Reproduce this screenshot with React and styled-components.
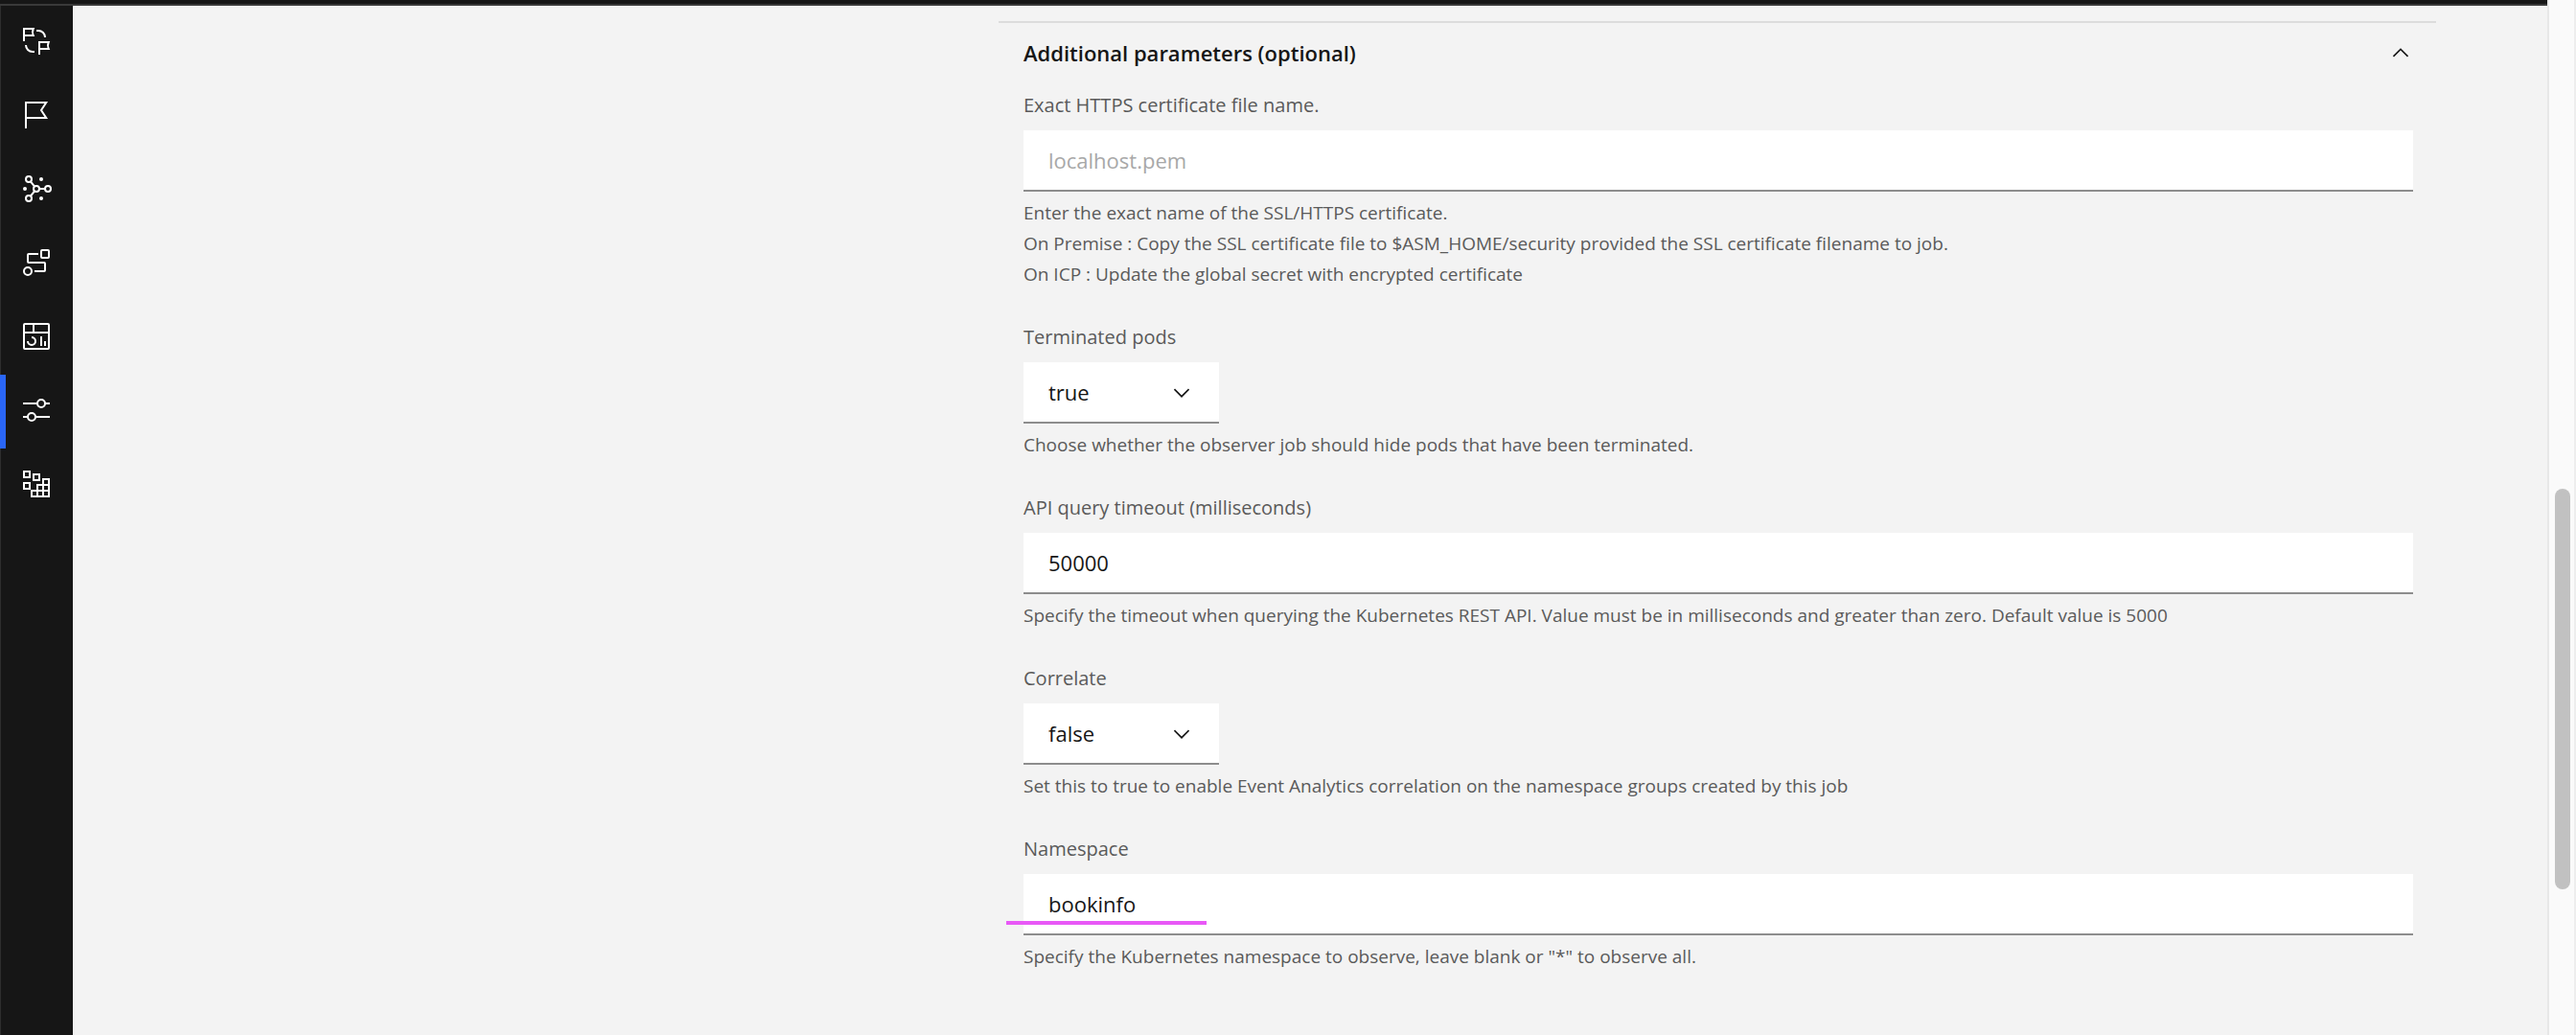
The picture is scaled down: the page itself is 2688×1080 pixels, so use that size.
import React, { useState } from "react";
import styled, { createGlobalStyle } from "styled-components";

const GlobalStyle = createGlobalStyle`
  *, *::before, *::after { box-sizing: border-box; }
  body {
    margin: 0;
    background: #f3f3f3;
    color: #161616;
    font-family: "Open Sans", "Noto Sans", sans-serif;
  }
  button, input, select { font: inherit; color: inherit; }
`;

const Shell = styled.div`
  display: flex;
  min-height: 100vh;
`;

const Page = styled.div`
  flex: 1;
  min-width: 0;
  display: flex;
  flex-direction: column;
`;

const TopBar = styled.header`
  height: 6px;
  background: #161616;
  border-bottom: 2px solid #393939;
`;

const Body = styled.div`
  flex: 1;
  display: flex;
`;

const SideNav = styled.nav`
  flex: none;
  width: 76px;
  background: #161616;
  box-shadow: inset 1px 0 #2e2e2e;
`;

const NavButton = styled.button`
  display: flex;
  justify-content: center;
  width: 100%;
  height: 77px;
  padding: 21px 0 24px;
  border: 0;
  background: transparent;
  box-shadow: ${({ $active }) => ($active ? "inset 6px 0 #2a66f6" : "none")};
  color: #ffffff;
  cursor: pointer;
`;

const NavIcon = styled.svg`
  width: 32px;
  height: 32px;
  fill: none;
  stroke: currentColor;
  stroke-width: 2;
`;

const Main = styled.main`
  flex: 1;
  display: grid;
  grid-template-columns: 966fr 1500fr 116fr;
  align-items: start;
  padding: 16px 0 64px;
`;

const Section = styled.section`
  grid-column: 2;
  min-width: 0;
  border-top: 2px solid #dcdcdc;
`;

const SectionHeading = styled.h2`
  margin: 0;
  font-size: 22px;
  font-weight: 600;
`;

const SectionToggle = styled.button`
  display: flex;
  align-items: center;
  justify-content: space-between;
  width: 100%;
  height: 62px;
  padding: 0 24px 0 26px;
  border: 0;
  background: transparent;
  text-align: left;
  cursor: pointer;
`;

const Chevron = styled.svg`
  width: 26px;
  height: 26px;
  fill: #161616;
`;

const Fields = styled.form`
  display: flex;
  flex-direction: column;
  gap: 38px;
  padding: 12px 24px 0 26px;
`;

const FieldGroup = styled.div`
  display: flex;
  flex-direction: column;
  align-items: flex-start;
`;

const Label = styled.label`
  margin-bottom: 14px;
  color: #5a5a5a;
  font-size: 20px;
  line-height: 24px;
`;

const Control = styled.div`
  position: relative;
  width: ${({ $compact }) => ($compact ? "204px" : "100%")};
`;

const TextInput = styled.input`
  display: block;
  width: 100%;
  height: 64px;
  padding: 0 26px;
  border: 0;
  border-bottom: 2px solid #8d8d8d;
  border-radius: 0;
  background: #ffffff;
  font-size: 22px;
  outline: none;

  &::placeholder { color: #a8a8a8; opacity: 1; }
`;

const Select = styled.select`
  display: block;
  width: 100%;
  height: 64px;
  padding: 0 64px 0 26px;
  border: 0;
  border-bottom: 2px solid #8d8d8d;
  border-radius: 0;
  background: #ffffff;
  font-size: 22px;
  appearance: none;
  outline: none;
`;

const SelectChevron = styled(Chevron)`
  position: absolute;
  top: 19px;
  right: 26px;
  pointer-events: none;
`;

const Underline = styled.span`
  position: absolute;
  left: -18px;
  bottom: 11px;
  width: 209px;
  height: 4px;
  background: #e858f6;
  pointer-events: none;
`;

const Help = styled.p`
  margin: 6px 0 0;
  color: #5a5a5a;
  font-size: 19px;
  line-height: 32px;
`;

const ScrollTrack = styled.div`
  flex: none;
  display: grid;
  grid-template-rows: 510fr 418fr 152fr;
  justify-items: end;
  width: 30px;
  padding-right: 4px;
  background: #fafafa;
  border-left: 2px solid #e7e7e7;
  border-right: 2px solid #ededed;
`;

const ScrollThumb = styled.div`
  grid-row: 2;
  width: 16px;
  border-radius: 8px;
  background: #c1c1c1;
`;

const NAV_ITEMS = [
  {
    name: "Stories and alerts",
    icon: (
      <>
        <path d="M3 16V3h9.7q-1.6 3.5 0 7H3M19 30V17h9.7q-1.6 3.5 0 7H19" />
        <path d="M16 5h2a7 7 0 0 1 7 7M5 20a7 7 0 0 0 7 7h2" />
      </>
    ),
  },
  { name: "Policies", icon: <path d="M5 30V3h21.2L21 11l5.2 8H5" /> },
  {
    name: "Topology",
    icon: (
      <>
        <circle cx="8" cy="6" r="3" />
        <circle cx="8" cy="26" r="3" />
        <circle cx="16" cy="16" r="3" />
        <circle cx="28" cy="16" r="3" />
        <path d="M19 16h6M9.9 8.4l4.2 5.2M9.9 23.6l4.2-5.2" />
        <g fill="currentColor" stroke="none">
          <circle cx="21" cy="6" r="2" />
          <circle cx="4" cy="16" r="2" />
          <circle cx="21" cy="26" r="2" />
        </g>
      </>
    ),
  },
  {
    name: "Runbooks",
    icon: (
      <>
        <rect x="21" y="3" width="8" height="8" rx="1" />
        <circle cx="7" cy="25" r="4" />
        <path d="M18 7H8a1 1 0 0 0-1 1v7a1 1 0 0 0 1 1h16a1 1 0 0 1 1 1v7a1 1 0 0 1-1 1H14" />
      </>
    ),
  },
  {
    name: "Dashboards",
    icon: (
      <>
        <rect x="3" y="3" width="26" height="26" rx="1" />
        <path d="M3 12h26M13 3v9M11 17a4 4 0 1 1-4 4M21 16v10M25 21v5" />
      </>
    ),
  },
  {
    name: "Administration",
    icon: (
      <>
        <circle cx="21" cy="9" r="4" />
        <circle cx="11" cy="23" r="4" />
        <path d="M2 9h15M25 9h5M2 23h5M15 23h15" />
      </>
    ),
  },
  {
    name: "Resource groups",
    icon: (
      <>
        <path d="M3 3h6v6H3zM13 6h6v6h-6zM3 15h6v6H3z" />
        <path d="M23 11h6v18H11v-6h6v-6h6zM23 11v18M17 17v12M23 17h6M17 23h12" />
      </>
    ),
  },
];

const FIELDS = [
  {
    id: "certificate",
    label: "Exact HTTPS certificate file name.",
    placeholder: "localhost.pem",
    value: "",
    help: [
      "Enter the exact name of the SSL/HTTPS certificate.",
      "On Premise : Copy the SSL certificate file to $ASM_HOME/security provided the SSL certificate filename to job.",
      "On ICP : Update the global secret with encrypted certificate",
    ],
  },
  {
    id: "terminated-pods",
    label: "Terminated pods",
    options: ["true", "false"],
    value: "true",
    help: ["Choose whether the observer job should hide pods that have been terminated."],
  },
  {
    id: "timeout",
    label: "API query timeout (milliseconds)",
    value: "50000",
    help: [
      "Specify the timeout when querying the Kubernetes REST API. Value must be in milliseconds and greater than zero. Default value is 5000",
    ],
  },
  {
    id: "correlate",
    label: "Correlate",
    options: ["true", "false"],
    value: "false",
    help: ["Set this to true to enable Event Analytics correlation on the namespace groups created by this job"],
  },
  {
    id: "namespace",
    label: "Namespace",
    value: "bookinfo",
    underlined: true,
    help: ['Specify the Kubernetes namespace to observe, leave blank or "*" to observe all.'],
  },
];

const CHEVRON_DOWN = "M16 22L6 12l1.4-1.4 8.6 8.6 8.6-8.6L26 12z";
const CHEVRON_UP = "M16 10l10 10-1.4 1.4-8.6-8.6-8.6 8.6L6 20z";

function Field({ id, label, value, placeholder, options, underlined, help }) {
  return (
    <FieldGroup>
      <Label htmlFor={id}>{label}</Label>
      <Control $compact={Boolean(options)}>
        {options ? (
          <>
            <Select id={id} defaultValue={value} aria-describedby={`${id}-help`}>
              {options.map((option) => (
                <option key={option}>{option}</option>
              ))}
            </Select>
            <SelectChevron viewBox="0 0 32 32" aria-hidden="true">
              <path d={CHEVRON_DOWN} />
            </SelectChevron>
          </>
        ) : (
          <TextInput
            id={id}
            type="text"
            defaultValue={value}
            placeholder={placeholder}
            aria-describedby={`${id}-help`}
          />
        )}
        {underlined && <Underline />}
      </Control>
      <Help id={`${id}-help`}>
        {help.map((line, index) => (
          <React.Fragment key={line}>
            {index > 0 && <br />}
            {line}
          </React.Fragment>
        ))}
      </Help>
    </FieldGroup>
  );
}

export default function App() {
  const [open, setOpen] = useState(true);
  return (
    <>
      <GlobalStyle />
      <Shell>
        <Page>
          <TopBar />
          <Body>
            <SideNav>
              {NAV_ITEMS.map(({ name, icon }) => (
                <NavButton key={name} type="button" aria-label={name} $active={name === "Administration"}>
                  <NavIcon viewBox="0 0 32 32" aria-hidden="true">
                    {icon}
                  </NavIcon>
                </NavButton>
              ))}
            </SideNav>
            <Main>
              <Section>
                <SectionHeading>
                  <SectionToggle type="button" aria-expanded={open} onClick={() => setOpen(!open)}>
                    Additional parameters (optional)
                    <Chevron viewBox="0 0 32 32" aria-hidden="true">
                      <path d={open ? CHEVRON_UP : CHEVRON_DOWN} />
                    </Chevron>
                  </SectionToggle>
                </SectionHeading>
                {open && (
                  <Fields>
                    {FIELDS.map((field) => (
                      <Field key={field.id} {...field} />
                    ))}
                  </Fields>
                )}
              </Section>
            </Main>
          </Body>
        </Page>
        <ScrollTrack>
          <ScrollThumb />
        </ScrollTrack>
      </Shell>
    </>
  );
}
